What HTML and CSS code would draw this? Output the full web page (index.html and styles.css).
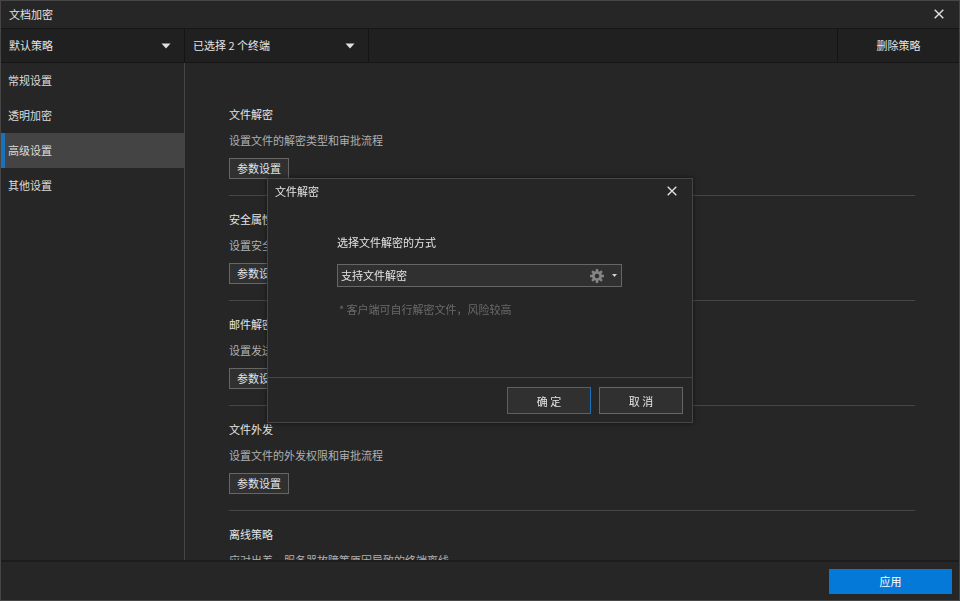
FILE: index.html
```html
<!DOCTYPE html>
<html lang="zh-CN">
<head>
  <meta charset="UTF-8" />
  <meta name="viewport" content="width=device-width, initial-scale=1.0"/>
  <title>文档加密</title>
  <link rel="stylesheet" href="styles.css">
</head>
<body>

  <div class="window">
    <header class="titlebar">
      <h1>文档加密</h1>
      <button class="close-btn" aria-label="关闭">
        <svg width="10" height="10" viewBox="0 0 10 10"><path d="M.7 .7l8.6 8.6M9.3 .7L.7 9.3"/></svg>
      </button>
    </header>

    <div class="toolbar">
      <div class="dropdown">
        <select aria-label="策略">
          <option>默认策略</option>
        </select>
        <svg class="arrow" width="10" height="6" viewBox="0 0 10 6"><path d="M.5 .5h9L5 5.5z"/></svg>
      </div>
      <div class="dropdown">
        <select aria-label="终端">
          <option>已选择 2 个终端</option>
        </select>
        <svg class="arrow" width="10" height="6" viewBox="0 0 10 6"><path d="M.5 .5h9L5 5.5z"/></svg>
      </div>
      <button class="delete-btn">删除策略</button>
    </div>

    <div class="main">
      <nav class="sidebar">
        <a href="#general">常规设置</a>
        <a href="#transparent">透明加密</a>
        <a href="#advanced" class="active">高级设置</a>
        <a href="#other">其他设置</a>
      </nav>

      <div class="content">
        <section>
          <h2>文件解密</h2>
          <p>设置文件的解密类型和审批流程</p>
          <button class="btn">参数设置</button>
        </section>
        <section>
          <h2>安全属性</h2>
          <p>设置安全属性权限</p>
          <button class="btn">参数设置</button>
        </section>
        <section>
          <h2>邮件解密</h2>
          <p>设置发送邮件解密</p>
          <button class="btn">参数设置</button>
        </section>
        <section>
          <h2>文件外发</h2>
          <p>设置文件的外发权限和审批流程</p>
          <button class="btn">参数设置</button>
        </section>
        <section>
          <h2>离线策略</h2>
          <p>应对出差、服务器故障等原因导致的终端离线</p>
          <button class="btn">参数设置</button>
        </section>
      </div>
    </div>

    <footer class="footer">
      <button class="apply-btn">应用</button>
    </footer>
  </div>

  <!-- Decrypt dialog -->
  <div class="overlay">
    <div class="dialog" role="dialog" aria-labelledby="dialog-title">
      <div class="dialog-header">
        <h2 id="dialog-title">文件解密</h2>
        <button class="close-btn" aria-label="关闭">
          <svg width="10" height="10" viewBox="0 0 10 10"><path d="M.7 .7l8.6 8.6M9.3 .7L.7 9.3"/></svg>
        </button>
      </div>
      <div class="dialog-body">
        <label for="mode">选择文件解密的方式</label>
        <div class="mode-select">
          <select id="mode">
            <option>支持文件解密</option>
          </select>
          <div class="mode-icons">
            <svg width="14" height="14" viewBox="0 0 14 14">
              <g class="teeth">
                <path d="M7 0v14M0 7h14M2.05 2.05l9.9 9.9M11.95 2.05l-9.9 9.9"/>
              </g>
              <circle class="ring" cx="7" cy="7" r="3.7"/>
              <circle class="hole" cx="7" cy="7" r="2.3"/>
            </svg>
            <svg class="caret" width="5" height="3" viewBox="0 0 5 3"><path d="M0 0h5L2.5 3z"/></svg>
          </div>
        </div>
        <p class="hint">* 客户端可自行解密文件，风险较高</p>
      </div>
      <div class="dialog-footer">
        <button class="btn primary">确 定</button>
        <button class="btn">取 消</button>
      </div>
    </div>
  </div>

</body>
</html>
```
FILE: styles.css
```css
* {
  box-sizing: border-box;
}
body {
  margin: 0;
  background: #262626;
  color: #e4e4e4;
  font-family: "Noto Sans CJK SC", sans-serif;
  font-size: 11px;
  line-height: 16px;
}
h1, h2, p {
  margin: 0;
  font-size: 11px;
  font-weight: normal;
}
button, select {
  font: inherit;
  color: inherit;
  border: none;
  border-radius: 0;
  background: none;
  cursor: pointer;
}

.window {
  display: flex;
  flex-direction: column;
  height: 100vh;
  border: 1px solid #464646;
}

.titlebar {
  display: flex;
  justify-content: space-between;
  align-items: center;
  height: 28px;
  padding: 0 8px 2px;
  border-bottom: 1px solid #161616;
}
.close-btn {
  display: flex;
  padding: 7px;
}
.close-btn path {
  fill: none;
  stroke: #e0e0e0;
  stroke-width: 1.4;
}

/* Toolbar */
.toolbar {
  display: flex;
  height: 34px;
  background: #202020;
  border-bottom: 1px solid #161616;
}
.dropdown {
  position: relative;
  width: 184px;
  border-right: 1px solid #141414;
}
.dropdown select {
  appearance: none;
  width: 100%;
  height: 100%;
  padding: 0 8px 2px;
}
.arrow {
  position: absolute;
  top: 14px;
  right: 13px;
  fill: #e0e0e0;
  pointer-events: none;
}
.delete-btn {
  width: 122px;
  margin-left: auto;
  padding: 0 0 2px;
  border-left: 1px solid #141414;
}

/* Sidebar and settings */
.main {
  display: flex;
  flex: 1;
  min-height: 0;
}
.sidebar {
  flex-shrink: 0;
  width: 184px;
  border-right: 1px solid #464646;
}
.sidebar a {
  display: flex;
  align-items: center;
  height: 35px;
  padding: 0 0 2px 7px;
  color: #dcdcdc;
  text-decoration: none;
}
.sidebar a.active {
  padding-left: 3px;
  border-left: 4px solid #1a72bb;
  background: #444;
}
.content {
  flex: 1;
  padding: 28px 44px 0;
  overflow: hidden;
}
.content section {
  display: flex;
  flex-direction: column;
  align-items: flex-start;
  gap: 10px;
  padding: 15px 0 16px;
  border-bottom: 1px solid #464646;
}
.content p {
  color: #b0b0b0;
}
.btn {
  border: 1px solid #666;
  background: #303030;
}
.content .btn {
  height: 21px;
  padding: 0 7px;
  line-height: 19px;
}

.footer {
  display: flex;
  justify-content: flex-end;
  align-items: center;
  height: 40px;
  padding: 0 7px;
  border-top: 2px solid #1c1c1c;
}
.apply-btn {
  width: 123px;
  height: 25px;
  background: #0579d8;
  color: #fff;
}

/* Dialog */
.overlay {
  position: fixed;
  inset: 0;
  display: flex;
  justify-content: center;
  align-items: center;
}
.dialog {
  width: 426px;
  border: 1px solid #464646;
  background: #262626;
  box-shadow: 0 0 5px rgba(0, 0, 0, 0.5);
}
.dialog-header {
  display: flex;
  justify-content: space-between;
  align-items: center;
  height: 26px;
  padding: 0 8px 2px 7px;
}
.dialog-body {
  padding: 29px 70px 60px 69px;
}
.dialog-body label {
  display: block;
  margin-bottom: 14px;
}
.mode-select {
  position: relative;
}
.mode-select select {
  display: block;
  appearance: none;
  width: 100%;
  height: 23px;
  padding: 0 3px 2px;
  border: 1px solid #666;
  background: #303030;
}
.mode-icons {
  position: absolute;
  top: 0;
  right: 5px;
  display: flex;
  align-items: center;
  gap: 8px;
  height: 100%;
  pointer-events: none;
}
.teeth {
  stroke: #858585;
  stroke-width: 2.4;
}
.ring {
  fill: none;
  stroke: #858585;
  stroke-width: 2.8;
}
.hole {
  fill: #303030;
}
.caret {
  fill: #d0d0d0;
}
.hint {
  margin-top: 14px;
  padding-left: 2px;
  color: #6a6a6a;
}
.dialog-footer {
  display: flex;
  justify-content: flex-end;
  gap: 8px;
  padding: 9px 9px 8px;
  border-top: 1px solid #464646;
}
.dialog-footer .btn {
  width: 84px;
  height: 27px;
}
.dialog-footer .primary {
  border-color: #1a72bb;
}
```
